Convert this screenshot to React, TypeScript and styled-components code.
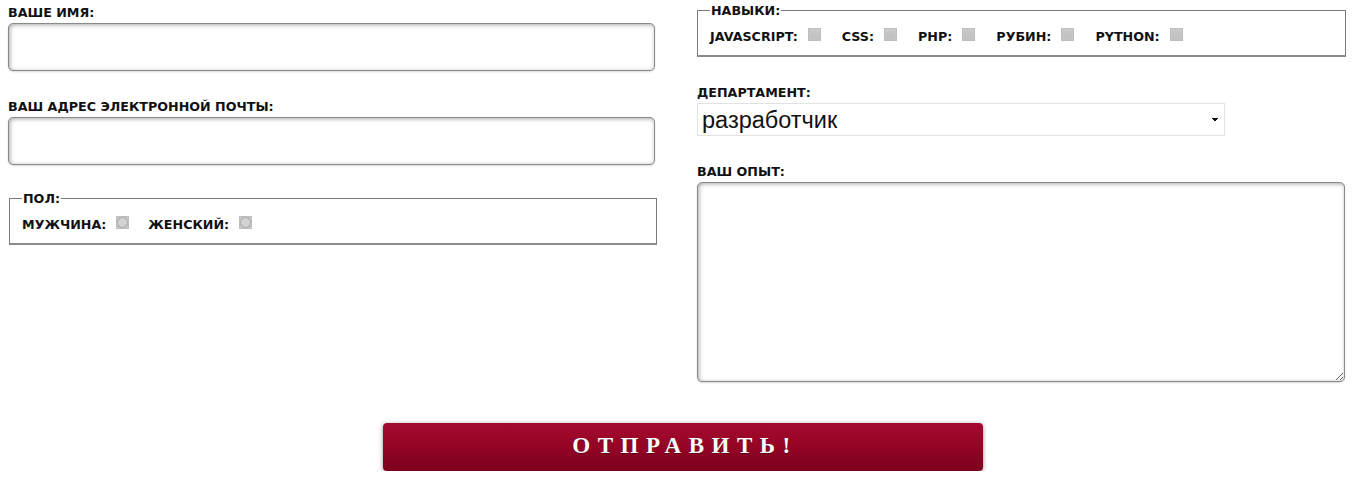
import React from "react";
import styled, { createGlobalStyle } from "styled-components";

const Global = createGlobalStyle`
  html, body { margin: 0; padding: 0; background: #fff; }
  body { font-family: "DejaVu Sans", Verdana, sans-serif; }
  * { box-sizing: border-box; }
`;

const Form = styled.form`
  display: flex;
  flex-direction: column;
  padding: 0 8px;
  width: 1354px;
`;

const Columns = styled.div`
  display: grid;
  grid-template-columns: 648px 648px;
  column-gap: 41px;
`;

const Column = styled.div`
  display: flex;
  flex-direction: column;
`;

const Label = styled.label<{ $top: number }>`
  display: block;
  margin-top: ${(p) => p.$top}px;
  font-size: 12.7px;
  line-height: 15px;
  font-weight: bold;
  color: #111;
  text-transform: uppercase;
`;

const TextInput = styled.input`
  display: block;
  width: 647px;
  height: 48px;
  margin-top: 3px;
  border: 1px solid #8a8a8a;
  border-radius: 5px;
  box-shadow: inset 1px 1px 4px rgba(0, 0, 0, 0.35), 0 1px 2px rgba(0, 0, 0, 0.15);
  background: #fff;
  outline: none;
`;

const Fieldset = styled.fieldset<{ $top: number; $left: number; $width: number }>`
  margin: ${(p) => p.$top}px 0 0 ${(p) => p.$left}px;
  width: ${(p) => p.$width}px;
  padding: 0 12px 11px 12px;
  border: 1px solid #7a7a7a;
  border-width: 1px 1px 2px 1px;
  border-bottom-color: #8a8a8a;
`;

const Legend = styled.legend`
  padding: 0 1px;
  font-size: 12.7px;
  line-height: 15px;
  font-weight: bold;
  color: #111;
`;

const Options = styled.div<{ $gap: number }>`
  display: flex;
  align-items: center;
  gap: ${(p) => p.$gap}px;
  margin-top: 10px;
`;

const Option = styled.label`
  display: flex;
  align-items: center;
  gap: 10px;
  font-size: 12.7px;
  line-height: 15px;
  font-weight: bold;
  color: #111;
`;

const Check = styled.input`
  appearance: none;
  margin: 0 0 3px 0;
  width: 13px;
  height: 13px;
  border: 1px solid #bdbdbd;
  background: linear-gradient(#c9c9c9, #bfbfbf);
  box-shadow: inset 0 0 1px #e8e8e8;
`;

const Radio = styled(Check)`
  background: radial-gradient(circle at 50% 50%, #d2d2d2 0 4px, #a9a9a9 5px, #c6c6c6 6px);
`;

const Select = styled.select`
  display: block;
  width: 528px;
  height: 33px;
  margin-top: 3px;
  border: 1px solid #e2e2e2;
  background: #fff;
  font-family: "Liberation Sans", Arial, sans-serif;
  font-size: 23.5px;
  color: #111;
  padding: 0 0 0 4px;
  appearance: none;
  background-image: linear-gradient(45deg, transparent 50%, #111 50%), linear-gradient(-45deg, transparent 50%, #111 50%);
  background-size: 3px 4px, 3px 4px;
  background-position: 514px 14px, 517px 14px;
  background-repeat: no-repeat;
  outline: none;
`;

const TextArea = styled.textarea`
  display: block;
  width: 648px;
  height: 200px;
  margin-top: 3px;
  border: 1px solid #8a8a8a;
  border-radius: 5px;
  box-shadow: inset 1px 1px 4px rgba(0, 0, 0, 0.35), 0 1px 2px rgba(0, 0, 0, 0.15);
  outline: none;
`;

const ButtonRow = styled.div`
  display: flex;
  justify-content: center;
  padding-left: 12px;
  margin-top: 41px;
`;

const Submit = styled.button`
  width: 600px;
  height: 48px;
  border: none;
  border-radius: 4px;
  background: linear-gradient(#a40a30 0%, #960526 45%, #7c001d 100%);
  box-shadow: 0 1px 4px rgba(0, 0, 0, 0.45);
  color: #fff;
  font-family: "Liberation Serif", "Times New Roman", serif;
  font-weight: bold;
  font-size: 23px;
  letter-spacing: 7.5px;
  text-shadow: 0 1px 1px rgba(0, 0, 0, 0.4);
  padding: 0 0 2px 4px;
`;

export default function App() {
  return (
    <>
      <Global />
      <Form onSubmit={(e) => e.preventDefault()}>
        <Columns>
          <Column>
            <Label $top={5}>Ваше имя:</Label>
            <TextInput type="text" />
            <Label $top={28}>Ваш адрес электронной почты:</Label>
            <TextInput type="email" />
            <Fieldset $top={26} $left={1} $width={648}>
              <Legend>ПОЛ:</Legend>
              <Options $gap={19}>
                <Option>
                  МУЖЧИНА: <Radio type="radio" name="g" />
                </Option>
                <Option>
                  ЖЕНСКИЙ: <Radio type="radio" name="g" />
                </Option>
              </Options>
            </Fieldset>
          </Column>
          <Column>
            <Fieldset $top={3} $left={0} $width={649}>
              <Legend>НАВЫКИ:</Legend>
              <Options $gap={21}>
                <Option>
                  JAVASCRIPT: <Check type="checkbox" />
                </Option>
                <Option>
                  CSS: <Check type="checkbox" />
                </Option>
                <Option>
                  PHP: <Check type="checkbox" />
                </Option>
                <Option>
                  РУБИН: <Check type="checkbox" />
                </Option>
                <Option>
                  PYTHON: <Check type="checkbox" />
                </Option>
              </Options>
            </Fieldset>
            <Label $top={28}>Департамент:</Label>
            <Select defaultValue="dev">
              <option value="dev">разработчик</option>
            </Select>
            <Label $top={28}>Ваш опыт:</Label>
            <TextArea />
          </Column>
        </Columns>
        <ButtonRow>
          <Submit type="submit">ОТПРАВИТЬ!</Submit>
        </ButtonRow>
      </Form>
    </>
  );
}
